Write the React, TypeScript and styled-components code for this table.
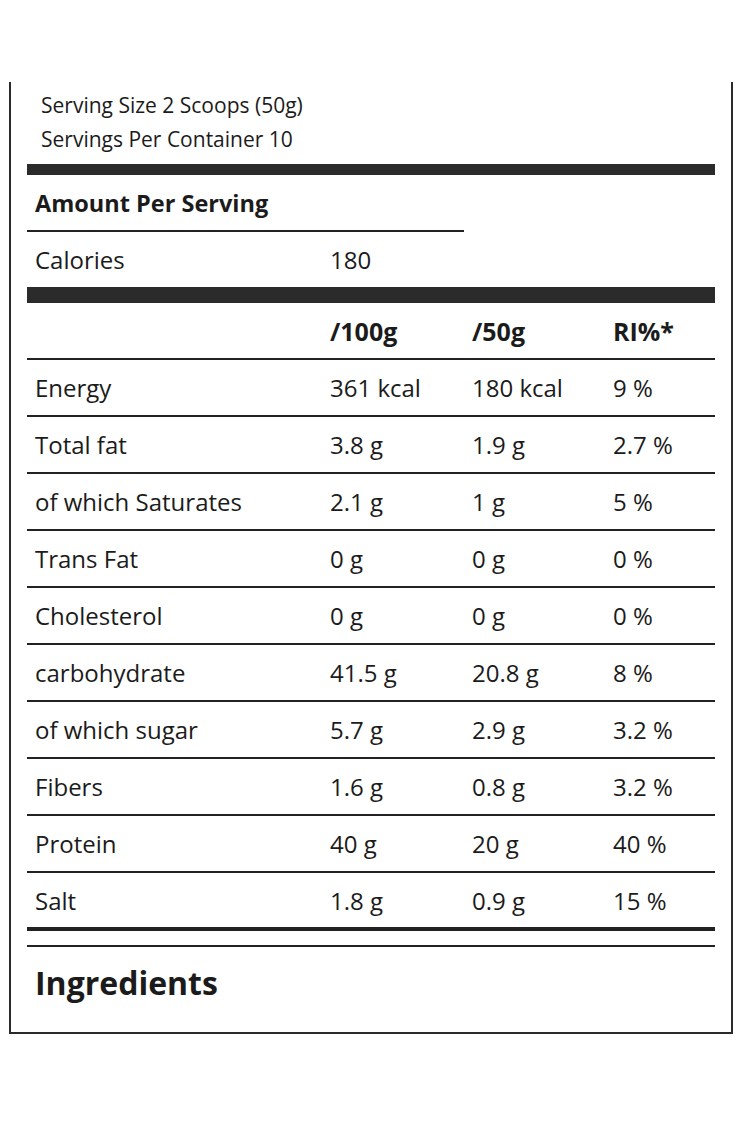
import styled, { createGlobalStyle } from 'styled-components';

const GlobalStyle = createGlobalStyle`
  body {
    margin: 0;
    background: #ffffff;
    color: #1b1b1b;
    font-family: "Open Sans", "Noto Sans", sans-serif;
  }
`;

const Page = styled.div`
  padding: 82px 11px 0 9px;
`;

const LabelBox = styled.div`
  width: 724px;
  border: 2px solid #2a2a2a;
  border-top: none;
  padding: 0 16px;
  box-sizing: border-box;
`;

const ServingInfo = styled.div`
  padding: 6px 0 8px 14px;
  font-size: 21px;
  line-height: 34px;
`;

const Bar = styled.div<{ $h: number }>`
  height: ${(p) => p.$h}px;
  background: #2b2b2b;
`;

const Row = styled.div<{ $h?: number; $border?: number }>`
  display: grid;
  grid-template-columns: 295px 142px 141px 1fr;
  align-items: center;
  height: ${(p) => p.$h ?? 55}px;
  border-bottom: ${(p) => p.$border ?? 2}px solid #222;
  font-size: 24px;
`;

const AmountRow = styled.div`
  width: 429px;
  height: 55px;
  display: flex;
  align-items: center;
  border-bottom: 2px solid #222;
  padding-left: 8px;
  font-size: 23.5px;
  font-weight: 700;
`;

const CaloriesRow = styled.div`
  display: grid;
  grid-template-columns: 295px 1fr;
  align-items: center;
  height: 55px;
  font-size: 24px;
`;

const Cell = styled.div<{ $bold?: boolean }>`
  padding-left: 8px;
  font-weight: ${(p) => (p.$bold ? 700 : 400)};
  font-size: ${(p) => (p.$bold ? 25 : 24)}px;
  white-space: nowrap;
`;

const Spacer = styled.div`
  height: 14px;
  border-bottom: 2px solid #222;
`;

const Ingredients = styled.h2`
  margin: 0;
  height: 85px;
  box-sizing: border-box;
  display: flex;
  align-items: center;
  padding: 0 0 15px 8px;
  font-size: 32px;
  font-weight: 700;
`;

const rows = [
  ['Energy', '361 kcal', '180 kcal', '9 %'],
  ['Total fat', '3.8 g', '1.9 g', '2.7 %'],
  ['of which Saturates', '2.1 g', '1 g', '5 %'],
  ['Trans Fat', '0 g', '0 g', '0 %'],
  ['Cholesterol', '0 g', '0 g', '0 %'],
  ['carbohydrate', '41.5 g', '20.8 g', '8 %'],
  ['of which sugar', '5.7 g', '2.9 g', '3.2 %'],
  ['Fibers', '1.6 g', '0.8 g', '3.2 %'],
  ['Protein', '40 g', '20 g', '40 %'],
  ['Salt', '1.8 g', '0.9 g', '15 %'],
];

function App() {
  return (
    <Page>
      <GlobalStyle />
      <LabelBox>
        <ServingInfo>
          <div>Serving Size 2 Scoops (50g)</div>
          <div>Servings Per Container 10</div>
        </ServingInfo>
        <Bar $h={11} />
        <AmountRow>Amount Per Serving</AmountRow>
        <CaloriesRow>
          <Cell>Calories</Cell>
          <Cell>180</Cell>
        </CaloriesRow>
        <Bar $h={16} />
        <Row>
          <Cell />
          <Cell $bold>/100g</Cell>
          <Cell $bold>/50g</Cell>
          <Cell $bold>RI%*</Cell>
        </Row>
        {rows.map((r, i) => (
          <Row
            key={r[0]}
            $h={i === rows.length - 1 ? 54 : 55}
            $border={i === rows.length - 1 ? 4 : 2}
          >
            {r.map((c, j) => (
              <Cell key={j}>{c}</Cell>
            ))}
          </Row>
        ))}
        <Spacer />
        <Ingredients>Ingredients</Ingredients>
      </LabelBox>
    </Page>
  );
}

export default App;
